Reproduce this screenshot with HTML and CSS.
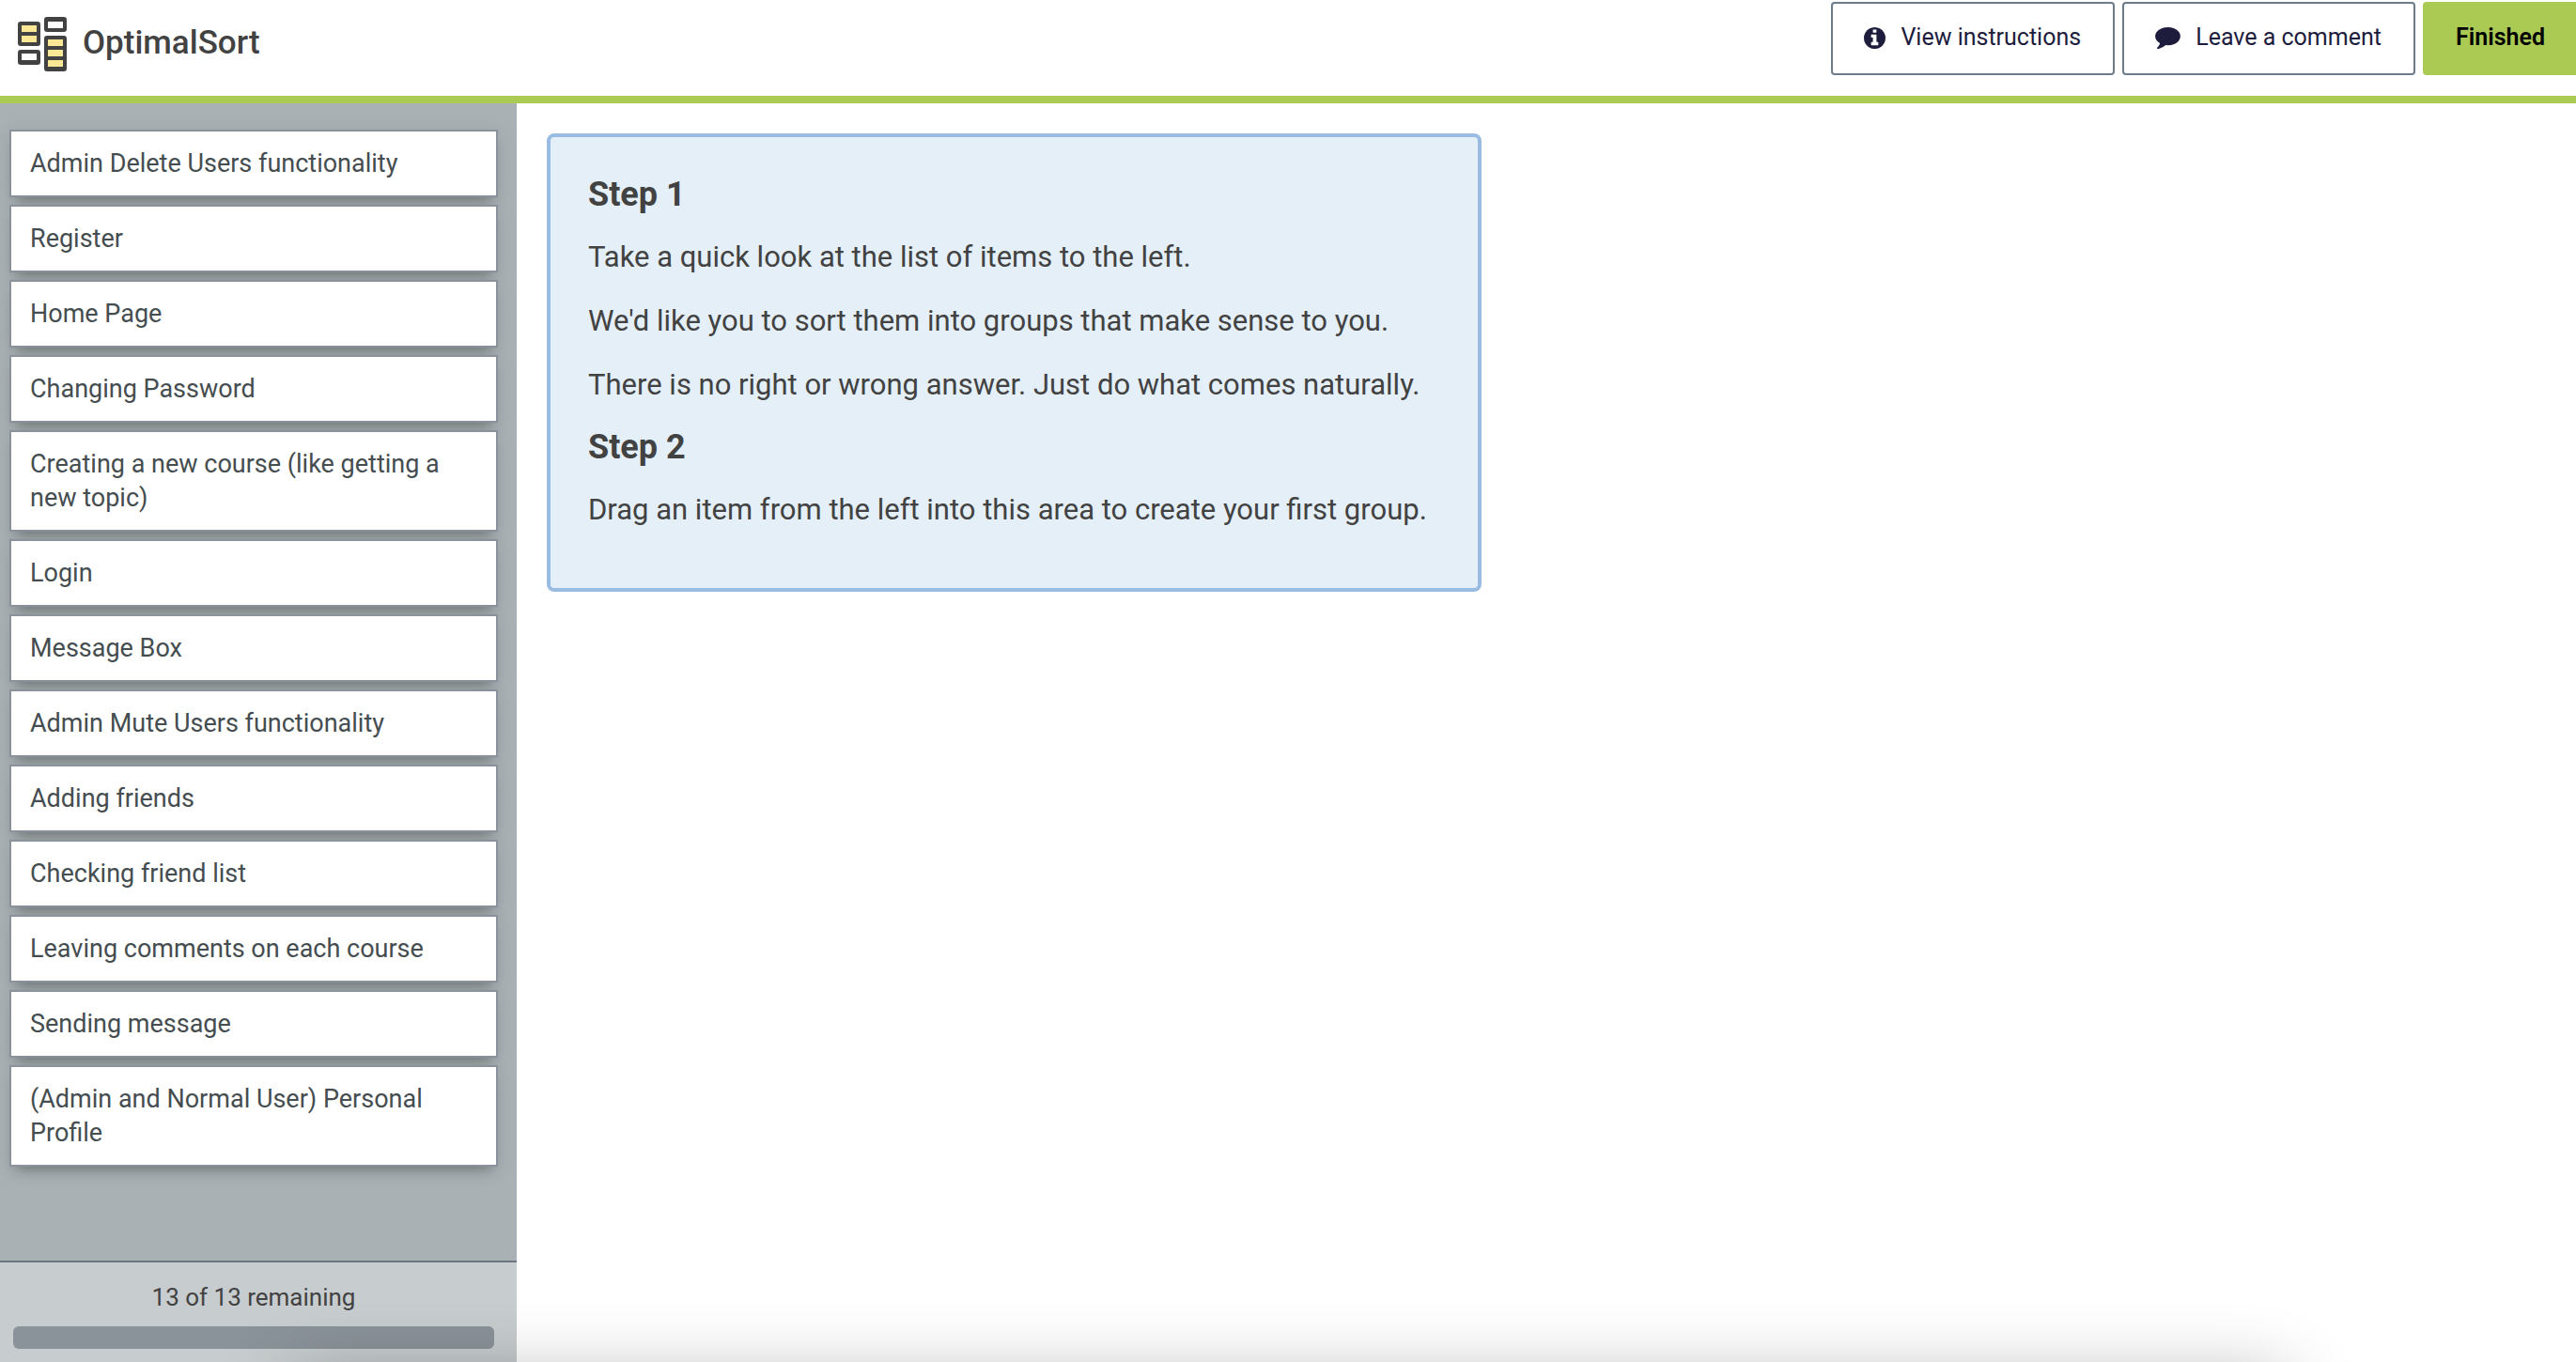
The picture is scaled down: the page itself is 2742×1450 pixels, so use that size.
FILE: index.html
```html
<!DOCTYPE html>
<html lang="en">
<head>
  <meta charset="utf-8">
  <meta name="viewport" content="width=device-width, initial-scale=1">
  <title>OptimalSort</title>
  <link rel="stylesheet" href="styles.css">
</head>
<body>
  <header class="topbar">
    <div class="brand">
      <svg class="brand-mark" viewBox="0 0 54 58" aria-hidden="true">
        <g fill="#424242">
          <rect x="1" y="5" width="24" height="26" rx="3"/>
          <rect x="29" y="0" width="24" height="16" rx="3"/>
          <rect x="1" y="35" width="24" height="16" rx="3"/>
          <rect x="29" y="20" width="24" height="38" rx="3"/>
        </g>
        <g fill="#fff">
          <rect x="33" y="5" width="16" height="7"/>
          <rect x="5" y="39" width="16" height="7"/>
        </g>
        <g fill="#fbe896">
          <rect x="5" y="9" width="16" height="7"/>
          <rect x="5" y="20" width="16" height="7"/>
          <rect x="33" y="24" width="16" height="7"/>
          <rect x="33" y="35" width="16" height="7"/>
          <rect x="33" y="46" width="16" height="7"/>
        </g>
      </svg>
      <span class="brand-name">OptimalSort</span>
    </div>
    <div class="actions">
      <button type="button" class="btn">
        <svg class="icon-info" viewBox="128 128 1536 1536" aria-hidden="true"><path fill="currentColor" d="M1152 1376v-160q0-14-9-23t-23-9h-96v-512q0-14-9-23t-23-9h-320q-14 0-23 9t-9 23v160q0 14 9 23t23 9h96v320h-96q-14 0-23 9t-9 23v160q0 14 9 23t23 9h448q14 0 23-9t9-23zm-128-896v-160q0-14-9-23t-23-9h-192q-14 0-23 9t-9 23v160q0 14 9 23t23 9h192q14 0 23-9t9-23zm640 416q0 209-103 385.5t-279.5 279.5-385.5 103-385.5-103-279.5-279.5-103-385.5 103-385.5 279.5-279.5 385.5-103 385.5 103 279.5 279.5 103 385.5z"/></svg>
        View instructions
      </button>
      <button type="button" class="btn">
        <svg class="icon-comment" viewBox="0 256 1792 1536" aria-hidden="true"><path fill="currentColor" d="M1792 896q0 174-120 321.5t-326 233-450 85.5q-70 0-145-8-198 175-460 242-49 14-114 22-17 2-30.5-9t-17.5-29v-1q-3-4-.5-12t2-10 4.5-9.5l6-9 7-8.5 8-9q7-8 31-34.5t34.5-38 31-39.5 32.5-51 27-59 26-76q-157-89-247.5-220t-90.5-281q0-130 71-248.5t191-204.5 286-136.5 348-50.5q244 0 450 85.5t326 233 120 321.5z"/></svg>
        Leave a comment
      </button>
      <button type="button" class="btn btn-primary">Finished</button>
    </div>
  </header>

  <div class="workspace">
    <aside class="sidebar">
      <ul class="cards">
        <li class="card">Admin Delete Users functionality</li>
        <li class="card">Register</li>
        <li class="card">Home Page</li>
        <li class="card">Changing Password</li>
        <li class="card">Creating a new course (like getting a new topic)</li>
        <li class="card">Login</li>
        <li class="card">Message Box</li>
        <li class="card">Admin Mute Users functionality</li>
        <li class="card">Adding friends</li>
        <li class="card">Checking friend list</li>
        <li class="card">Leaving comments on each course</li>
        <li class="card">Sending message</li>
        <li class="card">(Admin and Normal User) Personal Profile</li>
      </ul>
      <div class="remaining">
        <label class="remaining-label" for="remaining">13 of 13 remaining</label>
        <progress class="remaining-bar" id="remaining" value="13" max="13"></progress>
      </div>
    </aside>

    <main class="canvas">
      <section class="steps">
        <h2>Step 1</h2>
        <p>Take a quick look at the list of items to the left.</p>
        <p>We'd like you to sort them into groups that make sense to you.</p>
        <p>There is no right or wrong answer. Just do what comes naturally.</p>
        <h2>Step 2</h2>
        <p>Drag an item from the left into this area to create your first group.</p>
      </section>
    </main>
  </div>
</body>
</html>
```
FILE: styles.css
```css
* {
  box-sizing: border-box;
}

body {
  margin: 0;
  min-height: 100vh;
  display: flex;
  flex-direction: column;
  background: #fff;
  color: #424242;
  font-family: Roboto, "Liberation Sans", sans-serif;
}

/* Soft shade rising from the bottom edge of the window */
body::after {
  content: "";
  position: fixed;
  left: 310px;
  right: 310px;
  bottom: -120px;
  height: 100px;
  box-shadow: 0 0 80px rgba(0, 0, 0, 0.32);
  pointer-events: none;
}

/* Top bar */
.topbar {
  display: flex;
  justify-content: space-between;
  align-items: flex-start;
  min-height: 110px;
  border-bottom: 8px solid #aaca54;
}

.brand {
  display: flex;
  align-items: center;
  gap: 16px;
  padding: 18px;
}

.brand-mark {
  width: 54px;
  height: 58px;
}

.brand-name {
  padding-bottom: 2px;
  font-size: 35px;
  font-weight: 500;
  line-height: 36px;
}

.actions {
  display: flex;
  gap: 8px;
  padding-top: 2px;
}

.btn {
  display: flex;
  align-items: center;
  gap: 16px;
  padding: 18px 34px 20px 33px;
  border: 2px solid #6c7b8a;
  border-radius: 4px;
  background: #fff;
  color: #1d1c3d;
  font: 400 25px/36px Roboto, "Liberation Sans", sans-serif;
}

.btn-primary {
  padding-right: 31px;
  border-color: #aaca54;
  border-radius: 4px 0 0 4px;
  background: #aaca54;
  color: #000;
  font-weight: 600;
}

.icon-info {
  width: 23px;
  height: 23px;
}

.icon-comment {
  width: 27px;
  height: 23px;
}

/* Workspace */
.workspace {
  flex: 1;
  display: flex;
}

.sidebar {
  flex: 0 0 550px;
  display: flex;
  flex-direction: column;
  background: #a9b1b4;
}

.cards {
  flex: 1;
  display: flex;
  flex-direction: column;
  gap: 8px;
  margin: 0;
  padding: 28px 20px 28px 10px;
  list-style: none;
}

.card {
  padding: 16px 20px;
  border: 2px solid #8a939b;
  background: #fff;
  box-shadow: 0 4px 20px rgba(0, 0, 0, 0.1), 0 10px 12px -8px rgba(0, 0, 0, 0.3);
  color: #454d50;
  font-size: 27px;
  line-height: 36px;
}

.remaining {
  display: flex;
  flex-direction: column;
  gap: 13px;
  padding: 19px 24px 14px 14px;
  border-top: 2px solid #6b757d;
  background: #c7ccce;
}

.remaining-label {
  font-size: 26px;
  line-height: 36px;
  text-align: center;
}

.remaining-bar {
  display: block;
  width: 100%;
  height: 24px;
  border: 0;
  border-radius: 6px;
  overflow: hidden;
  background: #c7ccce;
  appearance: none;
}

.remaining-bar::-webkit-progress-bar {
  background: #c7ccce;
}

.remaining-bar::-webkit-progress-value {
  background: #8b939a;
}

.canvas {
  flex: 1;
  padding: 32px;
}

/* Instructions panel */
.steps {
  width: 995px;
  max-width: 100%;
  padding: 41px 40px 37px;
  border: 4px solid #9abce2;
  border-radius: 8px;
  background: #e4eff8;
}

.steps h2 {
  margin: 0 0 25px;
  font-size: 36px;
  font-weight: 700;
  line-height: 40px;
}

.steps p {
  margin: 0 0 24px;
  font-size: 31px;
  line-height: 44px;
}
```
